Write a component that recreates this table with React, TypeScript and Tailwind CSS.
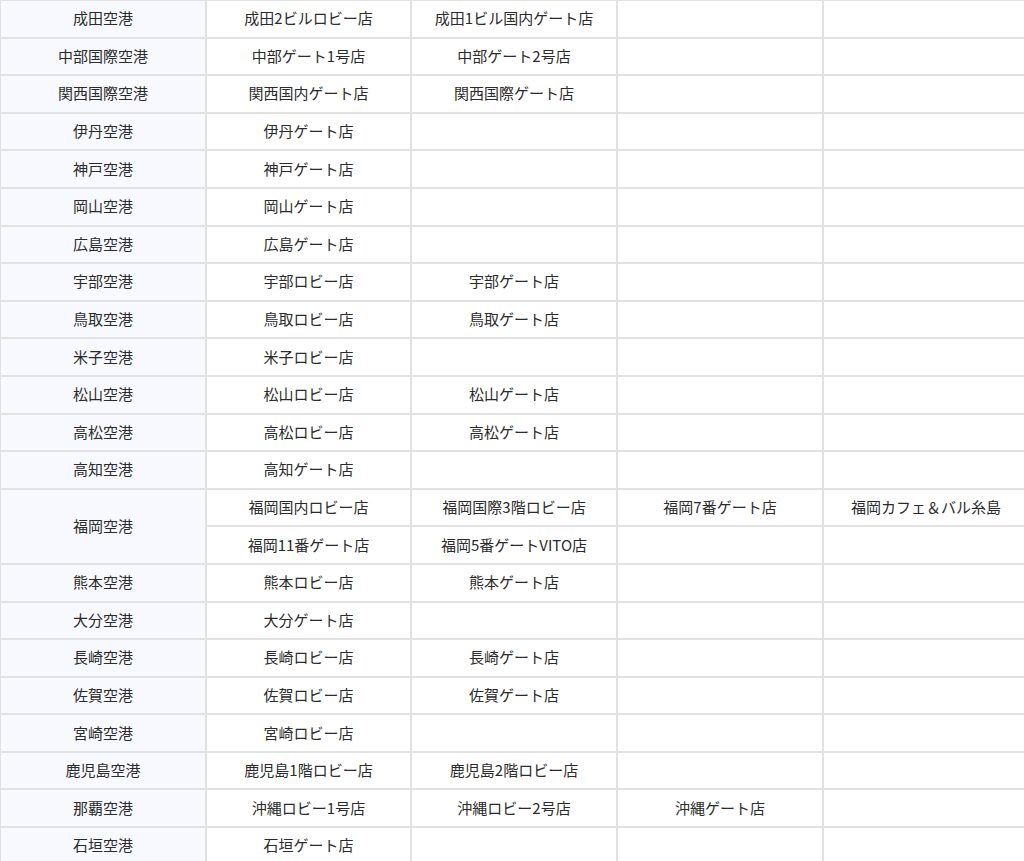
const rows: { airport: string; shops: string[][] }[] = [
  { airport: "成田空港", shops: [["成田2ビルロビー店", "成田1ビル国内ゲート店"]] },
  { airport: "中部国際空港", shops: [["中部ゲート1号店", "中部ゲート2号店"]] },
  { airport: "関西国際空港", shops: [["関西国内ゲート店", "関西国際ゲート店"]] },
  { airport: "伊丹空港", shops: [["伊丹ゲート店"]] },
  { airport: "神戸空港", shops: [["神戸ゲート店"]] },
  { airport: "岡山空港", shops: [["岡山ゲート店"]] },
  { airport: "広島空港", shops: [["広島ゲート店"]] },
  { airport: "宇部空港", shops: [["宇部ロビー店", "宇部ゲート店"]] },
  { airport: "鳥取空港", shops: [["鳥取ロビー店", "鳥取ゲート店"]] },
  { airport: "米子空港", shops: [["米子ロビー店"]] },
  { airport: "松山空港", shops: [["松山ロビー店", "松山ゲート店"]] },
  { airport: "高松空港", shops: [["高松ロビー店", "高松ゲート店"]] },
  { airport: "高知空港", shops: [["高知ゲート店"]] },
  {
    airport: "福岡空港",
    shops: [
      ["福岡国内ロビー店", "福岡国際3階ロビー店", "福岡7番ゲート店", "福岡カフェ＆バル糸島"],
      ["福岡11番ゲート店", "福岡5番ゲートVITO店"],
    ],
  },
  { airport: "熊本空港", shops: [["熊本ロビー店", "熊本ゲート店"]] },
  { airport: "大分空港", shops: [["大分ゲート店"]] },
  { airport: "長崎空港", shops: [["長崎ロビー店", "長崎ゲート店"]] },
  { airport: "佐賀空港", shops: [["佐賀ロビー店", "佐賀ゲート店"]] },
  { airport: "宮崎空港", shops: [["宮崎ロビー店"]] },
  { airport: "鹿児島空港", shops: [["鹿児島1階ロビー店", "鹿児島2階ロビー店"]] },
  { airport: "那覇空港", shops: [["沖縄ロビー1号店", "沖縄ロビー2号店", "沖縄ゲート店"]] },
  { airport: "石垣空港", shops: [["石垣ゲート店"]] },
];

const cell =
  "h-[37.6px] border-2 border-[#e2e2e2] p-0 pb-[2px] text-center align-middle text-[15px] leading-none text-[#2b2b2b]";

export default function App() {
  return (
    <div className="h-[861px] w-[1024px] overflow-hidden bg-white font-['Hiragino_Sans','Noto_Sans_CJK_JP',sans-serif]">
      <table className="w-[1029px] table-fixed border-collapse -mt-px -ml-px">
        <colgroup>
          <col className="w-[206px]" />
          <col className="w-[205px]" />
          <col className="w-[206px]" />
          <col className="w-[206px]" />
          <col className="w-[206px]" />
        </colgroup>
        <tbody>
          {rows.map((r) =>
            r.shops.map((line, i) => (
              <tr key={r.airport + i}>
                {i === 0 && (
                  <td rowSpan={r.shops.length} className={`${cell} bg-[#f7f9fe]`}>
                    {r.airport}
                  </td>
                )}
                {[0, 1, 2, 3].map((c) => (
                  <td key={c} className={cell}>
                    {line[c] ?? ""}
                  </td>
                ))}
              </tr>
            ))
          )}
        </tbody>
      </table>
    </div>
  );
}
